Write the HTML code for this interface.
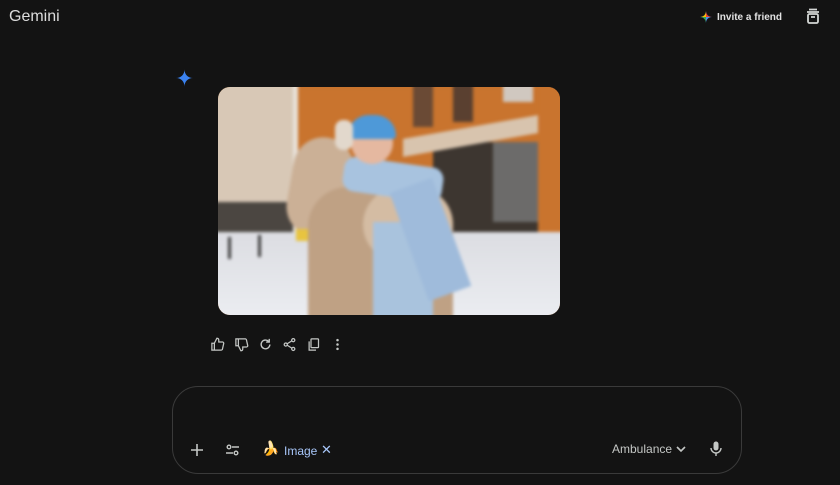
<!DOCTYPE html>
<html><head><style>
*{margin:0;padding:0;box-sizing:border-box}
body{width:840px;height:485px;background:#131313;font-family:"Liberation Sans",sans-serif;color:#e3e3e3;position:relative;overflow:hidden}
.a{position:absolute}
.img{left:218px;top:87px;width:342px;height:228px;border-radius:12px;overflow:hidden;background:#c9742e}
.in{position:absolute;left:0;top:0;width:342px;height:228px;filter:blur(1.5px)}
.in div{position:absolute}
.ic{position:absolute;top:337px}
</style></head><body>
<div class="a" style="left:9px;top:8px;font-size:16px;color:#dcdcdc">Gemini</div>
<svg class="a" style="left:700px;top:11px" width="12" height="12" viewBox="0 0 24 24"><path d="M12 0C12 7 17 12 24 12C17 12 12 17 12 24C12 17 7 12 0 12C7 12 12 7 12 0Z" fill="#4f8df5"/><path d="M12 0C12 7 17 12 24 12H12Z" fill="#e94335"/><path d="M12 24C12 17 7 12 0 12H12Z" fill="#34a853"/><path d="M0 12C7 12 12 7 12 0V12Z" fill="#fbbc04"/></svg>
<div class="a" style="left:717px;top:12px;font-size:10px;color:#e3e3e3;font-weight:bold">Invite a friend</div>
<svg class="a" style="left:805px;top:8px" width="16" height="17" viewBox="0 0 16 17" fill="none" stroke="#d4d7d5" stroke-width="1.8"><rect x="3" y="6" width="10" height="9" rx="1.5"/><path d="M2 4h12M4 1.5h8M6 9h4"/></svg>
<svg class="a" style="left:176px;top:69px" width="17" height="18" viewBox="0 0 24 24"><path d="M12 0C12 7 17 12 24 12C17 12 12 17 12 24C12 17 7 12 0 12C7 12 12 7 12 0Z" fill="#3b82f0"/></svg>
<div class="a img"><div class="in">
 <div style="left:-6px;top:-6px;width:82px;height:156px;background:#d8c8b6"></div>
 <div style="left:-6px;top:115px;width:82px;height:35px;background:#4b4641"></div>
 <div style="left:75px;top:-6px;width:5px;height:156px;background:#e8e2da"></div>
 <div style="left:80px;top:-6px;width:268px;height:6px;background:#c9742e"></div>
 <div style="left:320px;top:0;width:28px;height:150px;background:#c9742e"></div>
 <div style="left:215px;top:55px;width:105px;height:100px;background:#3d3630"></div>
 <div style="left:275px;top:55px;width:45px;height:80px;background:#6c6b6a"></div>
 <div style="left:185px;top:40px;width:135px;height:18px;background:#d8c4ae;transform:skewY(-10deg)"></div>
 <div style="left:195px;top:-6px;width:20px;height:46px;background:#6a4a35"></div>
 <div style="left:235px;top:-6px;width:20px;height:41px;background:#5a4030"></div>
 <div style="left:285px;top:-6px;width:30px;height:21px;background:#d0c8c0"></div>
 <div style="left:-6px;top:145px;width:354px;height:90px;background:linear-gradient(#dcdde2,#eceef2)"></div>
 <div style="left:72px;top:50px;width:60px;height:100px;background:#cbb096;border-radius:30px;transform:rotate(10deg)"></div>
 <div style="left:90px;top:100px;width:145px;height:135px;background:#bfa184;border-radius:40px 40px 0 0"></div>
 <div style="left:145px;top:100px;width:90px;height:75px;background:#d4bca3;border-radius:40px"></div>
 <div style="left:125px;top:75px;width:100px;height:35px;background:#a8c3df;border-radius:12px;transform:rotate(8deg)"></div>
 <div style="left:155px;top:135px;width:60px;height:100px;background:#a9c3dd"></div>
 <div style="left:190px;top:95px;width:45px;height:115px;background:#9fbbdb;transform:rotate(-20deg)"></div>
 <div style="left:133px;top:35px;width:42px;height:42px;background:#e5b8a0;border-radius:50%"></div>
 <div style="left:130px;top:28px;width:48px;height:24px;background:#4e99d8;border-radius:24px 24px 4px 4px"></div>
 <div style="left:117px;top:33px;width:18px;height:30px;background:#e2d8cc;border-radius:8px"></div>
 <div style="left:10px;top:150px;width:3px;height:22px;background:#3b3b3b"></div>
 <div style="left:40px;top:148px;width:3px;height:22px;background:#3b3b3b"></div>
 <div style="left:78px;top:142px;width:12px;height:12px;background:#e8c440"></div>
</div></div>
<svg class="ic" style="left:210px" width="15" height="15" viewBox="0 0 24 24" fill="none" stroke="#c4c7c5" stroke-width="2"><path d="M3 10h4v11H3zM7 10l4-8c2 0 3 1 3 3v3h6c1 0 2 1 2 2l-2 9c0 1-1 2-2 2H7"/></svg>
<svg class="ic" style="left:234px" width="15" height="15" viewBox="0 0 24 24" fill="none" stroke="#c4c7c5" stroke-width="2"><path d="M3 3h4v11H3zM7 14l4 8c2 0 3-1 3-3v-3h6c1 0 2-1 2-2l-2-9c0-1-1-2-2-2H7"/></svg>
<svg class="ic" style="left:258px" width="15" height="15" viewBox="0 0 24 24" fill="none" stroke="#c4c7c5" stroke-width="2.2"><path d="M19 12a7 7 0 1 1-2-5M18 3v5h-5"/></svg>
<svg class="ic" style="left:282px" width="15" height="15" viewBox="0 0 24 24" fill="none" stroke="#c4c7c5" stroke-width="2"><circle cx="18" cy="5" r="2.5"/><circle cx="6" cy="12" r="2.5"/><circle cx="18" cy="19" r="2.5"/><path d="M8 11l8-5M8 13l8 5"/></svg>
<svg class="ic" style="left:306px" width="15" height="15" viewBox="0 0 24 24" fill="none" stroke="#c4c7c5" stroke-width="2"><rect x="8" y="3" width="12" height="14" rx="1"/><path d="M5 7v14h11"/></svg>
<svg class="ic" style="left:330px" width="15" height="15" viewBox="0 0 24 24" fill="#c4c7c5"><circle cx="12" cy="5" r="2"/><circle cx="12" cy="12" r="2"/><circle cx="12" cy="19" r="2"/></svg>
<div class="a" style="left:172px;top:386px;width:570px;height:88px;border:1px solid #3a3a3a;border-radius:26px;background:#131313"></div>
<svg class="a" style="left:190px;top:443px" width="14" height="14" viewBox="0 0 14 14" stroke="#c4c7c5" stroke-width="1.6"><path d="M7 1v12M1 7h12"/></svg>
<svg class="a" style="left:225px;top:443px" width="15" height="14" viewBox="0 0 15 14" fill="none" stroke="#c4c7c5" stroke-width="1.4"><circle cx="4" cy="4" r="1.8"/><path d="M7 4h7M1 10h7"/><circle cx="11" cy="10" r="1.8"/></svg>
<div class="a" style="left:262px;top:441px;font-size:14px;font-family:'Noto Color Emoji','DejaVu Sans',sans-serif">🍌</div>
<div class="a" style="left:284px;top:444px;font-size:12px;color:#a8c7fa">Image</div>
<div class="a" style="left:321px;top:442px;font-size:13px;color:#a8c7fa">✕</div>
<div class="a" style="left:612px;top:442px;font-size:12px;color:#c4c7c5">Ambulance</div>
<svg class="a" style="left:676px;top:445px" width="10" height="8" viewBox="0 0 10 8" fill="none" stroke="#c4c7c5" stroke-width="1.6"><path d="M1 2l4 4 4-4"/></svg>
<svg class="a" style="left:710px;top:441px" width="12" height="16" viewBox="0 0 12 16" fill="#c4c7c5"><rect x="3.5" y="0.5" width="5" height="9" rx="2.5"/><path d="M1 7a5 5 0 0 0 10 0" fill="none" stroke="#c4c7c5" stroke-width="1.4"/><rect x="5.3" y="12" width="1.4" height="3"/></svg>
</body></html>
